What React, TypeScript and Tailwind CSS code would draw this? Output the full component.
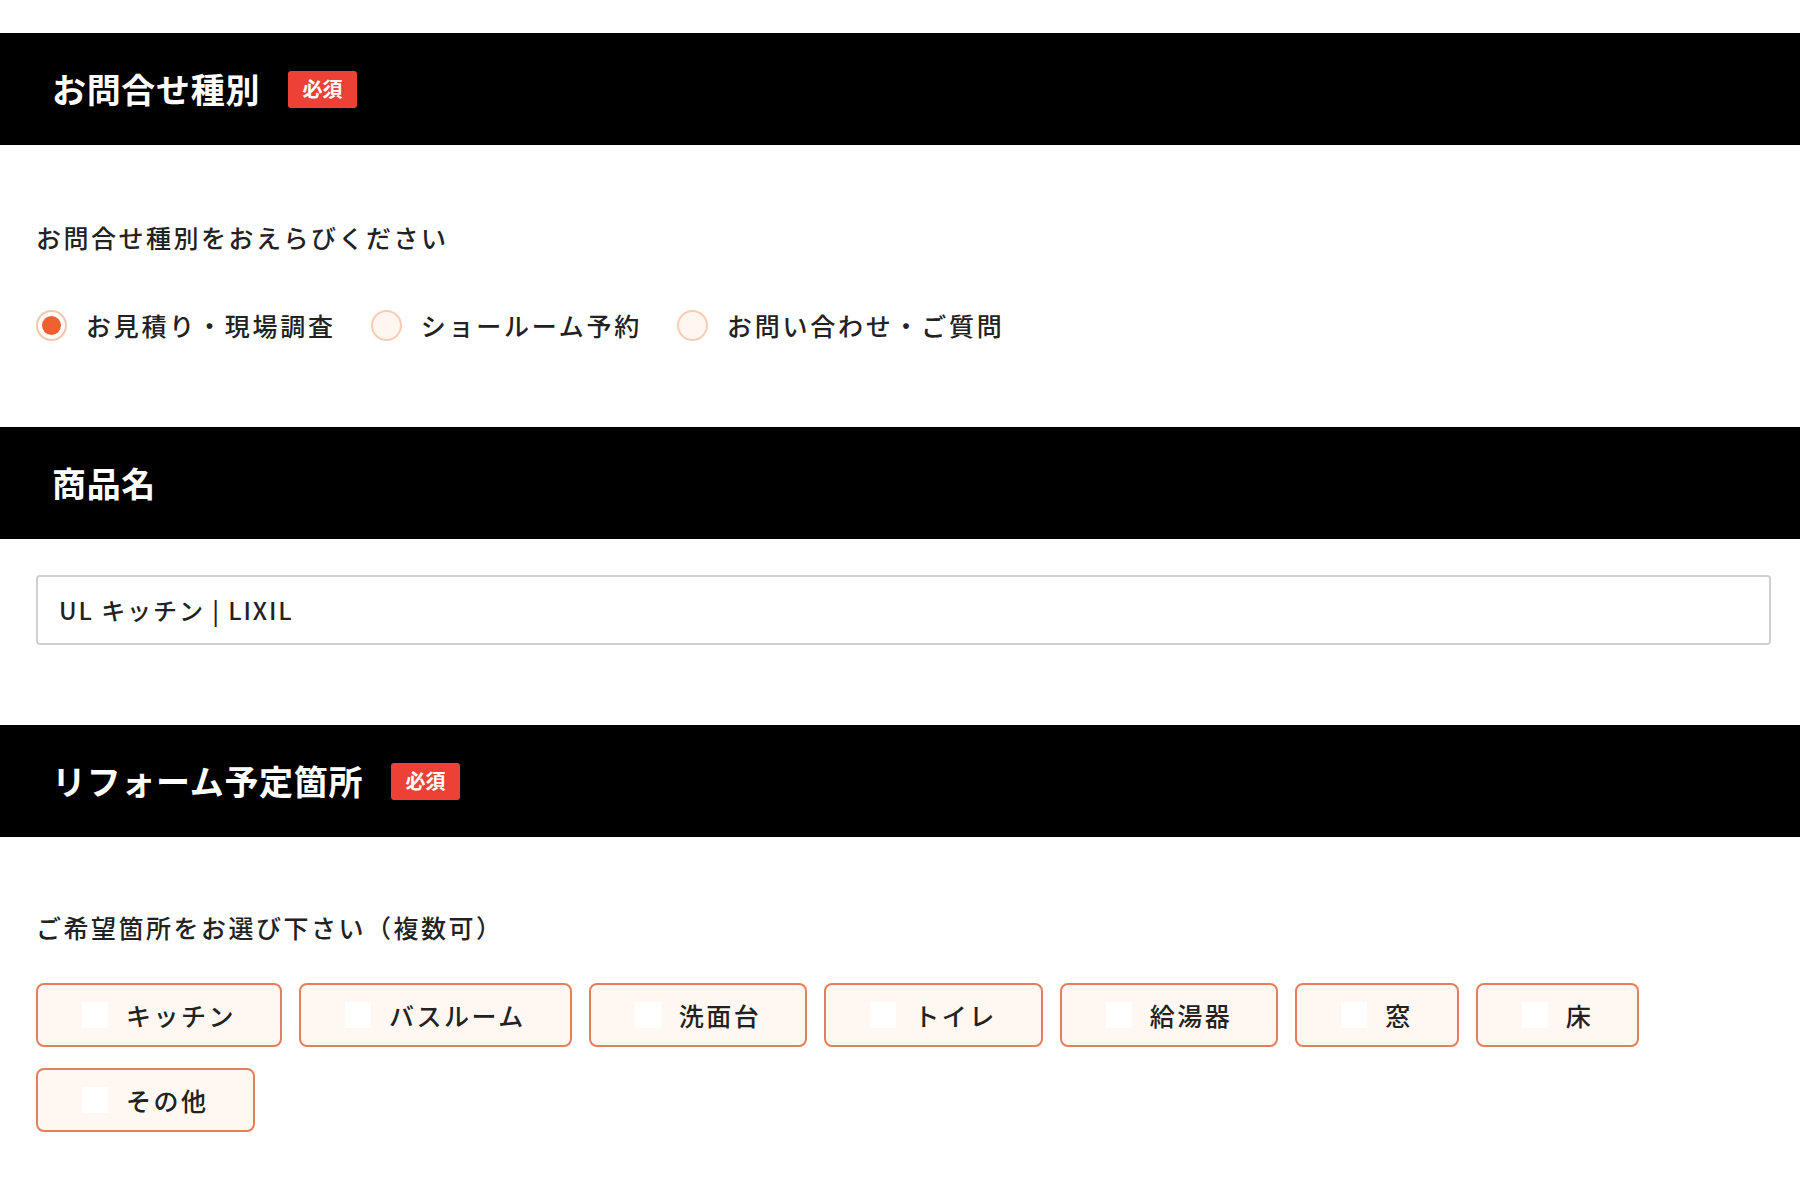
import React, { useState } from 'react';

const font = { fontFamily: '"Noto Sans CJK JP", "Noto Sans", sans-serif' };

const inquiryTypes = ['お見積り・現場調査', 'ショールーム予約', 'お問い合わせ・ご質問'];
const places = ['キッチン', 'バスルーム', '洗面台', 'トイレ', '給湯器', '窓', '床', 'その他'];

const Required = () => (
  <span className="ml-[28px] flex h-[37px] w-[69px] items-center justify-center rounded-[3px] bg-[#ee4136] text-[20px] font-bold text-white">
    必須
  </span>
);

const SectionHead = ({ title, required }: { title: string; required?: boolean }) => (
  <div className="flex h-[112px] items-center bg-black pl-[52px]">
    <h2 className="text-[34px] font-bold leading-none tracking-[0.02em] text-white">{title}</h2>
    {required && <Required />}
  </div>
);

const App: React.FC = () => {
  const [kind, setKind] = useState(0);
  const [checked, setChecked] = useState<string[]>([]);

  const toggle = (p: string) =>
    setChecked(c => (c.includes(p) ? c.filter(x => x !== p) : [...c, p]));

  return (
    <div className="min-h-[1200px] w-full bg-white pt-[33px] text-[#222]" style={font}>
      <SectionHead title="お問合せ種別" required />
      <div className="pl-[36px] pr-[29px]">
        <p className="mt-[74px] text-[25px] font-medium leading-[36px] tracking-[0.1em]">お問合せ種別をおえらびください</p>
        <div className="mt-[52px] flex items-center">
          {inquiryTypes.map((t, i) => (
            <label key={t} className="mr-[35px] flex cursor-pointer items-center" onClick={() => setKind(i)}>
              <span
                className={`flex h-[31px] w-[31px] items-center justify-center rounded-full border-2 ${
                  kind === i ? 'border-[#f5c6ad] bg-white' : 'border-[#f6cdb7] bg-[#fff6f0]'
                }`}
              >
                {kind === i && <span className="h-[19px] w-[19px] rounded-full bg-[#f2602f]" />}
              </span>
              <span className="ml-[19px] text-[25px] font-medium leading-[36px] tracking-[0.11em]">{t}</span>
            </label>
          ))}
        </div>
      </div>

      <div className="mt-[84px]">
        <SectionHead title="商品名" />
      </div>
      <div className="pl-[36px] pr-[29px]">
        <div className="mt-[36px] flex h-[70px] items-center rounded-[4px] border-2 border-[#d0d0d0] px-[21px] text-[24px] font-medium tracking-[0.08em]">
          UL キッチン | LIXIL
        </div>
      </div>

      <div className="mt-[80px]">
        <SectionHead title="リフォーム予定箇所" required />
      </div>
      <div className="pl-[36px] pr-[29px]">
        <p className="mt-[72px] text-[25px] font-medium leading-[36px] tracking-[0.1em]">ご希望箇所をお選び下さい（複数可）</p>
        <div className="mt-[38px] flex flex-wrap gap-x-[17px] gap-y-[21px]">
          {places.map(p => (
            <label
              key={p}
              onClick={() => toggle(p)}
              className="flex h-[64px] cursor-pointer items-center rounded-[8px] border-2 border-[#e57e5d] bg-[#fff7f1] px-[44px]"
            >
              <span className="flex h-[26px] w-[26px] items-center justify-center bg-white text-[18px] text-[#f2602f]">
                {checked.includes(p) ? '✓' : ''}
              </span>
              <span className="ml-[18px] text-[25px] font-medium leading-none tracking-[0.1em]">{p}</span>
            </label>
          ))}
        </div>
      </div>
    </div>
  );
};

export default App;
